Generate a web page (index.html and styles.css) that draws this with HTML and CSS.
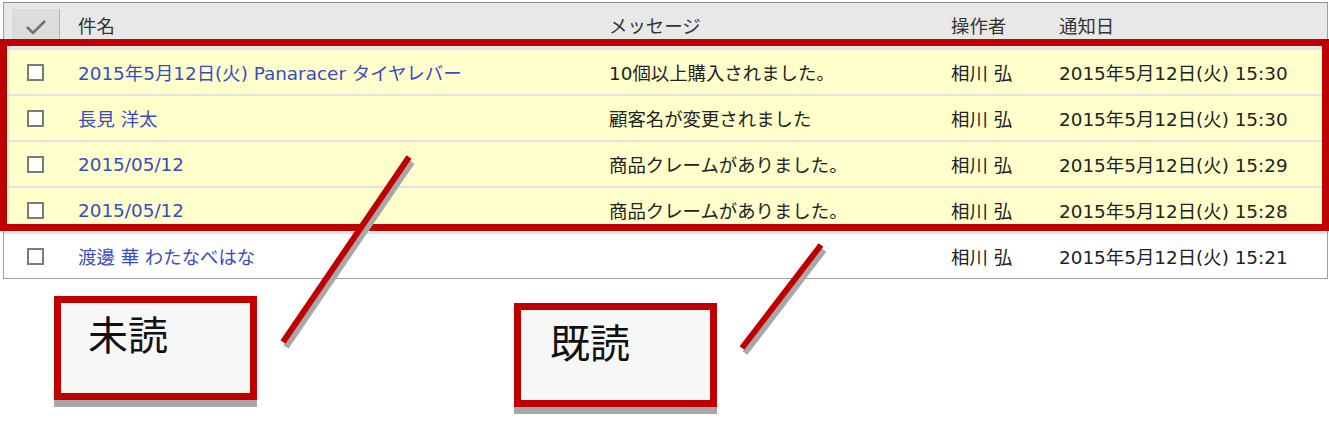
FILE: index.html
```html
<!DOCTYPE html>
<html lang="ja">
<head>
  <meta charset="UTF-8">
  <title>通知一覧</title>
  <link rel="stylesheet" href="styles.css">
</head>
<body>
  <div class="page">
    <!-- notification list -->
    <div class="list">
      <div class="row head">
        <div class="cell">
          <span class="check-all">
            <svg width="48" height="31" viewBox="0 0 48 31"><polyline points="15,18 21,24 33,12" fill="none" stroke="#707070" stroke-width="2.6"/></svg>
          </span>
        </div>
        <div class="cell">件名</div>
        <div class="cell">メッセージ</div>
        <div class="cell">操作者</div>
        <div class="cell">通知日</div>
      </div>

      <div class="row unread">
        <div class="cell"><span class="box"></span></div>
        <div class="cell title">2015年5月12日(火) Panaracer タイヤレバー</div>
        <div class="cell">10個以上購入されました。</div>
        <div class="cell">相川 弘</div>
        <div class="cell">2015年5月12日(火) 15:30</div>
      </div>
      <div class="row unread">
        <div class="cell"><span class="box"></span></div>
        <div class="cell title">長見 洋太</div>
        <div class="cell">顧客名が変更されました</div>
        <div class="cell">相川 弘</div>
        <div class="cell">2015年5月12日(火) 15:30</div>
      </div>
      <div class="row unread">
        <div class="cell"><span class="box"></span></div>
        <div class="cell title">2015/05/12</div>
        <div class="cell">商品クレームがありました。</div>
        <div class="cell">相川 弘</div>
        <div class="cell">2015年5月12日(火) 15:29</div>
      </div>
      <div class="row unread">
        <div class="cell"><span class="box"></span></div>
        <div class="cell title">2015/05/12</div>
        <div class="cell">商品クレームがありました。</div>
        <div class="cell">相川 弘</div>
        <div class="cell">2015年5月12日(火) 15:28</div>
      </div>
      <div class="row last">
        <div class="cell"><span class="box"></span></div>
        <div class="cell title">渡邊 華 わたなべはな</div>
        <div class="cell"></div>
        <div class="cell">相川 弘</div>
        <div class="cell">2015年5月12日(火) 15:21</div>
      </div>
    </div>

    <!-- callouts -->
    <div class="notes">
      <div class="note">未読</div>
      <div class="note second">既読</div>
    </div>

    <!-- red frame around unread rows and the leader lines -->
    <div class="highlight"></div>
    <svg class="leaders" width="1329" height="437" viewBox="0 0 1329 437">
      <line x1="412" y1="162" x2="286" y2="347" stroke="#a8a8a8" stroke-width="6"/>
      <line x1="824" y1="250" x2="745" y2="353" stroke="#a8a8a8" stroke-width="6"/>
      <line x1="409" y1="157" x2="283" y2="342" stroke="#c00000" stroke-width="6"/>
      <line x1="821" y1="245" x2="742" y2="348" stroke="#c00000" stroke-width="6"/>
    </svg>
  </div>
</body>
</html>
```

FILE: styles.css
```css
html, body {
  overflow: hidden;
}
body {
  margin: 0;
  padding: 0;
  background-color: #ffffff;
  font-family: "DejaVu Sans", "Noto Sans CJK JP", sans-serif;
  font-size: 18.4px;
  color: #222222;
}
.page {
  position: relative;
  width: 1329px;
  height: 437px;
  overflow: hidden;
}
.list {
  width: 1323px;
  margin: 2px 0 0 3px;
  border: 1px solid #a0a0a0;
  border-top-color: #8c8c8c;
}
.row {
  display: grid;
  grid-template-columns: 74px 531px 342px 108px 1fr;
  height: 44px;
  border-bottom: 2px solid #e2e2e2;
}
.row.head {
  height: 45px;
  background-color: #e8e8e8;
  color: #333333;
}
.row.unread {
  background-color: #ffffcc;
}
.row.last {
  border-bottom: none;
}
.cell {
  display: flex;
  align-items: center;
  white-space: nowrap;
}
.head .cell {
  padding-bottom: 2px;
}
.check-all {
  display: block;
  width: 47px;
  height: 31px;
  margin: 0 0 0 8px;
  background-color: #dcdcdc;
  border-right: 1px solid #b4b4b4;
}
.check-all svg {
  display: block;
}
.box {
  display: block;
  width: 13px;
  height: 13px;
  margin-left: 23px;
  border: 2px solid #7a7a7a;
  background-color: #ffffff;
}
.title {
  color: #3a4bc6;
}
.notes {
  display: flex;
  align-items: flex-start;
  padding: 17px 0 0 54px;
}
.note {
  width: 162px;
  height: 80px;
  padding: 10px 0 0 27px;
  border: 7px solid #c00000;
  background-color: #f7f7f7;
  box-shadow: 0 7px 0 #a8a8a8;
  font-family: "Noto Sans CJK JP", sans-serif;
  font-size: 40px;
  line-height: 40px;
  color: #111111;
}
.note.second {
  margin: 7px 0 0 257px;
  padding-top: 11px;
  padding-left: 29px;
  width: 160px;
  height: 79px;
}
.highlight {
  position: absolute;
  left: 0;
  top: 39px;
  width: 1315px;
  height: 178px;
  border: 7px solid #c00000;
}
.leaders {
  position: absolute;
  left: 0;
  top: 0;
}
```
